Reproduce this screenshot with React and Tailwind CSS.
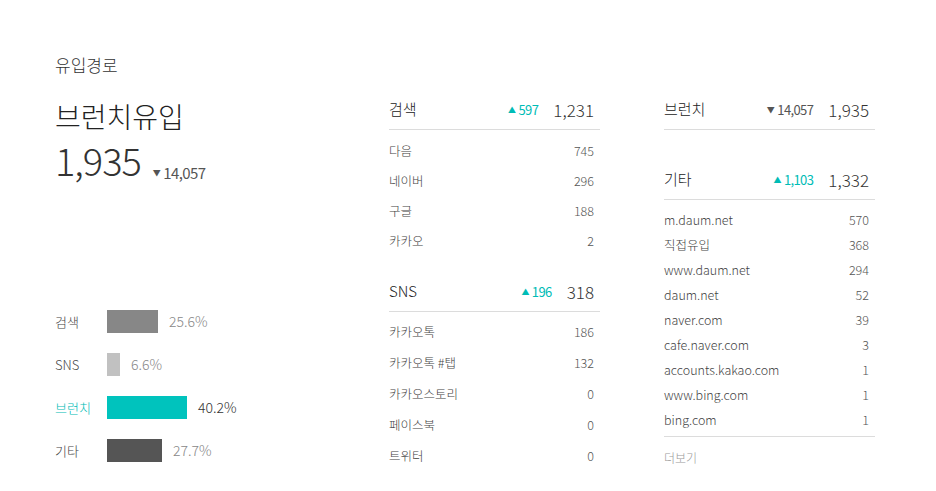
import React from 'react';

const FONT = { fontFamily: '"Noto Sans CJK KR", "Noto Sans", sans-serif' };

const bars = [
  { label: '검색', pct: '25.6%', width: 'w-[51px]', color: 'bg-[#878787]', active: false },
  { label: 'SNS', pct: '6.6%', width: 'w-[13px]', color: 'bg-[#c1c1c1]', active: false },
  { label: '브런치', pct: '40.2%', width: 'w-[80px]', color: 'bg-[#00c3bd]', active: true },
  { label: '기타', pct: '27.7%', width: 'w-[55px]', color: 'bg-[#555555]', active: false },
];

const search = [
  ['다음', 745],
  ['네이버', 296],
  ['구글', 188],
  ['카카오', 2],
];

const sns = [
  ['카카오톡', 186],
  ['카카오톡 #탭', 132],
  ['카카오스토리', 0],
  ['페이스북', 0],
  ['트위터', 0],
];

const etc = [
  ['m.daum.net', 570],
  ['직접유입', 368],
  ['www.daum.net', 294],
  ['daum.net', 52],
  ['naver.com', 39],
  ['cafe.naver.com', 3],
  ['accounts.kakao.com', 1],
  ['www.bing.com', 1],
  ['bing.com', 1],
];

// 증감 표시 (▲ 증가 / ▼ 감소)
const Delta = ({ up, value, size = 'text-[13px]' }) => (
  <span
    className={`flex items-center gap-[3px] ${size} tracking-[-0.6px] ${
      up ? 'text-[#00bcb6]' : 'text-[#555]'
    }`}
  >
    <span className="text-[8px]">{up ? '▲' : '▼'}</span>
    {value}
  </span>
);

const SectionHeader = ({ title, up, delta, total }) => (
  <div className="flex h-[40px] items-center border-b border-[#dcdcdc] pr-[6px]">
    <span className="flex-1 text-[15px] font-light text-[#222]">{title}</span>
    <Delta up={up} value={delta} />
    <span className="ml-[15px] text-[17px] font-light text-[#333]">{total}</span>
  </div>
);

const Row = ({ name, value, h }) => (
  <div
    className={`flex ${h} items-center justify-between pr-[6px] text-[12.5px] font-light text-[#444]`}
  >
    <span>{name}</span>
    <span className="text-[#555]">{value}</span>
  </div>
);

export default function App() {
  return (
    <div className="min-h-[491px] w-[936px] bg-white pl-[55px] pt-[52px]" style={FONT}>
      <h1 className="h-[26px] text-[17px] font-light leading-[26px] text-[#333]">유입경로</h1>

      <div className="mt-[12px] flex">
        {/* 요약 + 막대 그래프 */}
        <div className="w-[334px]">
          <div className="mt-[10px] text-[28px] font-light leading-[32px] text-[#222]">브런치유입</div>
          <div className="mt-[6px] flex items-baseline">
            <span className="text-[38px] font-light leading-[44px] tracking-[-1px] text-[#333]">1,935</span>
            <span className="ml-[12px]">
              <Delta up={false} value="14,057" size="text-[15px]" />
            </span>
          </div>

          <div className="mt-[116px]">
            {bars.map((b) => (
              <div key={b.label} className="flex h-[43px] items-center">
                <span
                  className={`w-[52px] text-[13px] font-light ${
                    b.active ? 'text-[#00bcb6]' : 'text-[#444]'
                  }`}
                >
                  {b.label}
                </span>
                <span className={`h-[23px] ${b.width} ${b.color}`} />
                <span
                  className={`ml-[11px] text-[14px] font-light ${
                    b.active ? 'text-[#333]' : 'text-[#888]'
                  }`}
                >
                  {b.pct}
                </span>
              </div>
            ))}
          </div>
        </div>

        {/* 검색 / SNS */}
        <div className="w-[211px]">
          <SectionHeader title="검색" up delta="597" total="1,231" />
          <div className="pt-[6px]">
            {search.map(([n, v]) => (
              <Row key={n} name={n} value={v} h="h-[30px]" />
            ))}
          </div>
          <div className="mt-[16px]">
            <SectionHeader title="SNS" up delta="196" total="318" />
            <div className="pt-[5px]">
              {sns.map(([n, v]) => (
                <Row key={n} name={n} value={v} h="h-[31px]" />
              ))}
            </div>
          </div>
        </div>

        {/* 브런치 / 기타 */}
        <div className="ml-[64px] w-[211px]">
          <SectionHeader title="브런치" up={false} delta="14,057" total="1,935" />
          <div className="mt-[30px]">
            <SectionHeader title="기타" up delta="1,103" total="1,332" />
          </div>
          <div className="border-b border-[#dcdcdc] pb-[3px] pt-[8px]">
            {etc.map(([n, v]) => (
              <Row key={n} name={n} value={v} h="h-[25px]" />
            ))}
          </div>
          <div className="mt-[12px] text-[12px] font-light text-[#999]">더보기</div>
        </div>
      </div>
    </div>
  );
}
